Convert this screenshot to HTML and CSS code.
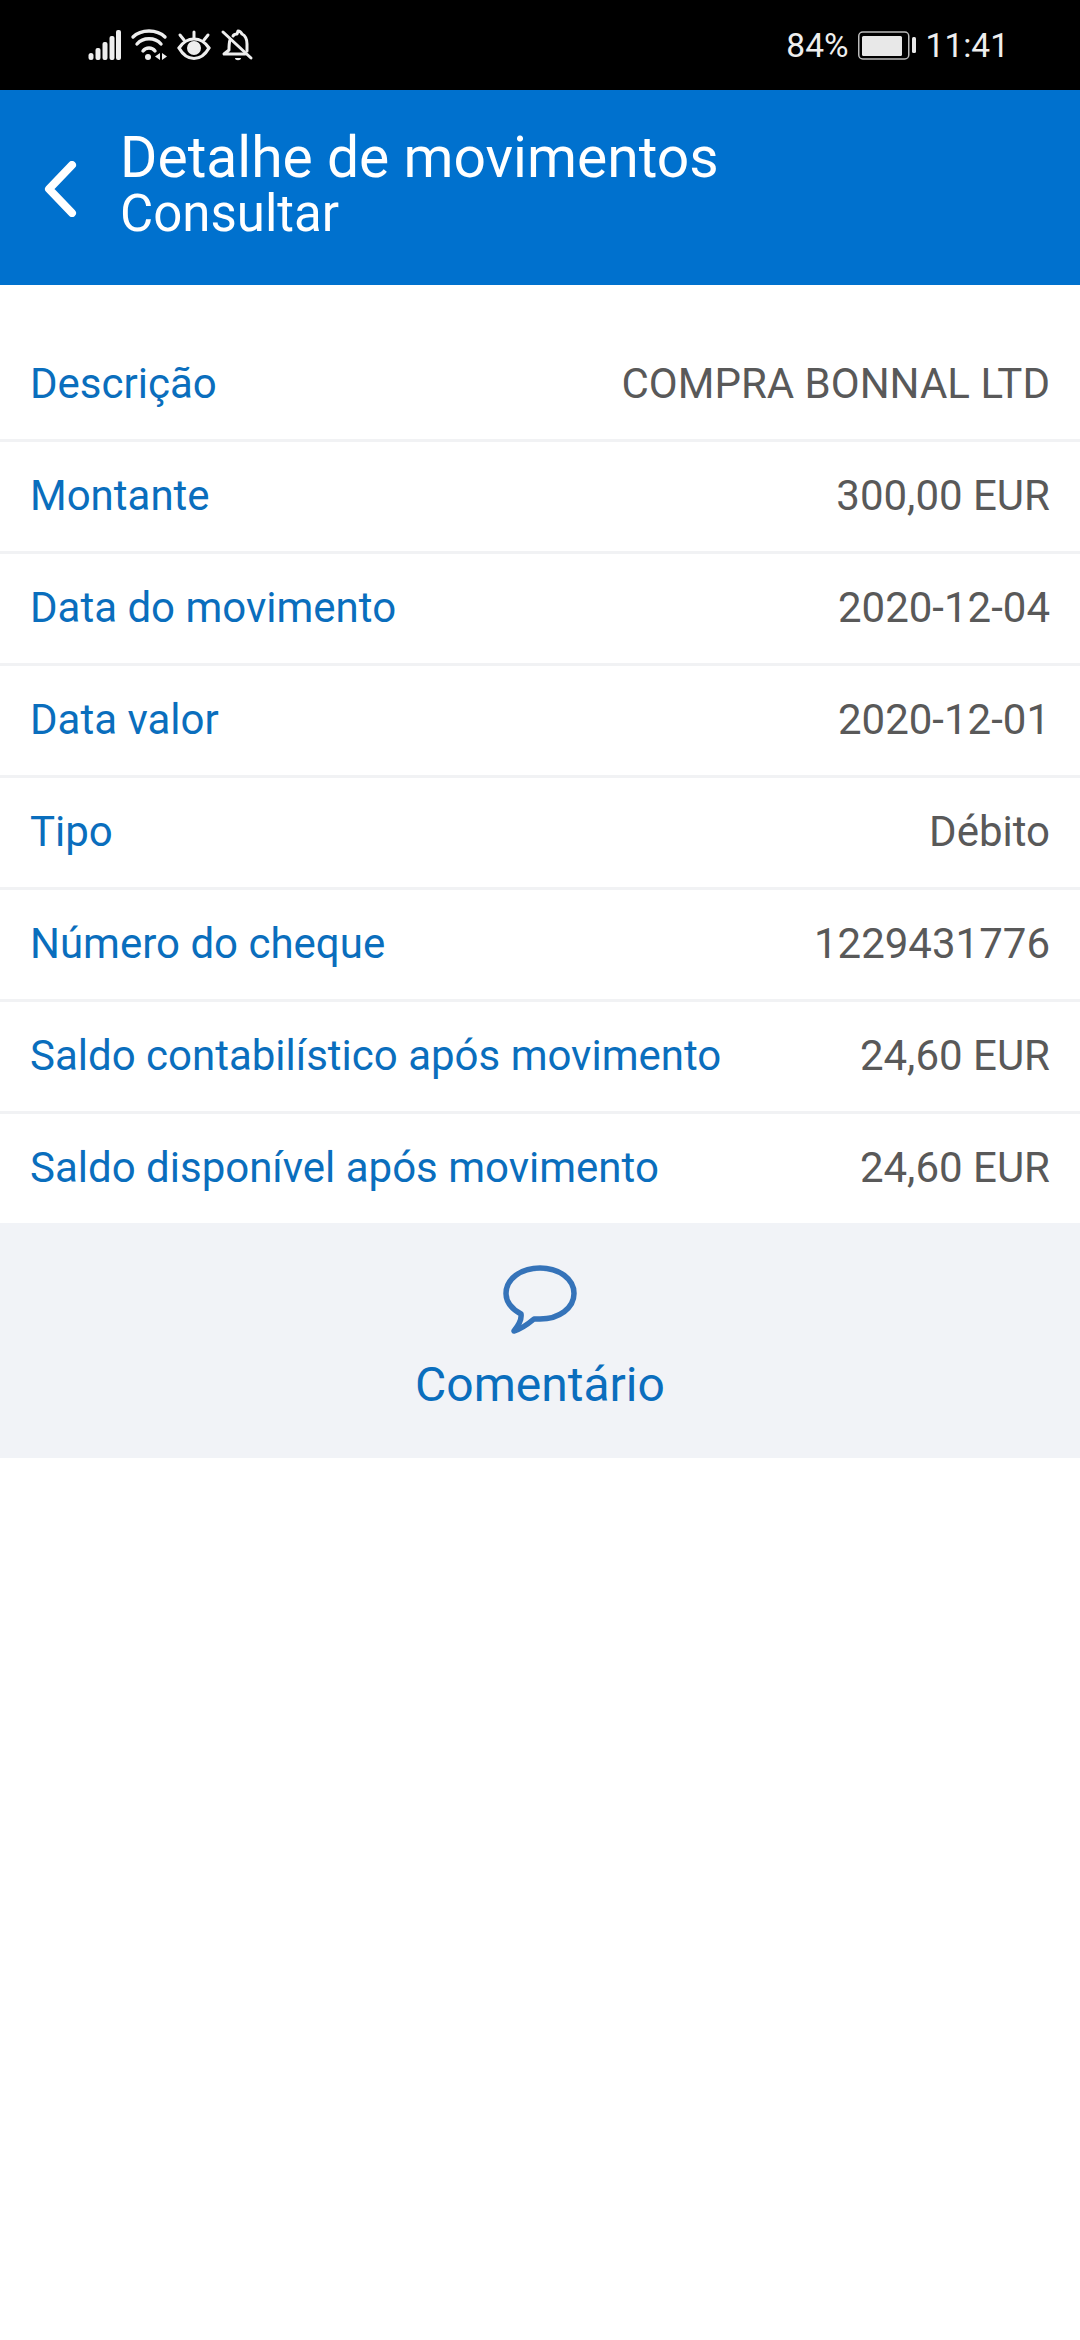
FILE: index.html
```html
<!DOCTYPE html>
<html lang="pt">
<head>
  <meta charset="UTF-8" />
  <title>Detalhe de movimentos</title>
  <link rel="stylesheet" href="styles.css">
</head>
<body>

<div class="status-bar">
  <div class="status-icons">
    <svg class="icon-signal" width="33" height="32" viewBox="0 0 33 32">
      <g fill="#eee">
        <rect x="0.500" y="24" width="5" height="7" rx="2.500"/>
        <rect x="7.500" y="19" width="5" height="12" rx="2"/>
        <rect x="14.500" y="13" width="5" height="18" rx="2"/>
        <rect x="21.500" y="7" width="5" height="24" rx="2"/>
        <rect x="28" y="1" width="5" height="30" rx="2"/>
      </g>
    </svg>
    <svg class="icon-wifi" width="38" height="32" viewBox="0 0 38 32">
      <g fill="none" stroke="#eee" stroke-width="3.400" stroke-linecap="round">
        <path d="M3 8C11 0 27 0 35 8"/>
        <path d="M7 15C13 8 25 8 31 15"/>
        <path d="M13 22C16 18 22 18 25 22"/>
      </g>
      <circle cx="18" cy="28" r="3" fill="#eee"/>
      <path d="M30 24v7l-5-3.500zM32 24v7l5-3.500z" fill="#eee"/>
    </svg>
    <svg class="icon-eye" width="34" height="32" viewBox="0 0 34 32">
      <path d="M2 19C10 7 24 7 32 19C24 33 10 33 2 19Z" fill="none" stroke="#eee" stroke-width="3.200"/>
      <circle cx="17" cy="19" r="7" fill="#eee"/>
      <path d="M17 3v6M3 6l4 5M31 6l-4 5" stroke="#eee" stroke-width="3" stroke-linecap="round"/>
    </svg>
    <svg class="icon-bell" width="34" height="32" viewBox="0 0 34 32">
      <g fill="none" stroke="#eee" stroke-width="3" stroke-linecap="round" stroke-linejoin="round">
        <path d="M3 3L31 29"/>
        <path d="M10 11C9 14 9 18 9 21L4 25H25"/>
        <path d="M13 7C14 5 16 5 17 5L18 2C19 2 21 3 22 5C26 7 27 10 27 15V22"/>
      </g>
      <path d="M15 29h6c0 3-6 3-6 0z" fill="#eee"/>
    </svg>
  </div>
  <div class="status-right">
    <span>84%</span>
    <svg class="icon-battery" width="59" height="30" viewBox="0 0 59 30">
      <rect x="0.750" y="2" width="50" height="27" rx="4" fill="none" stroke="#bbb" stroke-width="1.500"/>
      <rect x="4" y="6" width="40" height="20" rx="1.500" fill="#e8e8e8"/>
      <rect x="54" y="7" width="4" height="16" rx="1.500" fill="#e8e8e8"/>
    </svg>
    <span>11:41</span>
  </div>
</div>

<header class="app-header">
  <svg class="back-icon" width="36" height="56" viewBox="0 0 36 56">
    <path d="M30 4L7 28L30 52" fill="none" stroke="#fff" stroke-width="8" stroke-linecap="round" stroke-linejoin="round"/>
  </svg>
  <div class="titles">
    <h1>Detalhe de movimentos</h1>
    <h2>Consultar</h2>
  </div>
</header>

<main class="details">
  <div class="row"><span class="label">Descrição</span><span class="value">COMPRA BONNAL LTD</span></div>
  <div class="row"><span class="label">Montante</span><span class="value">300,00 EUR</span></div>
  <div class="row"><span class="label">Data do movimento</span><span class="value">2020-12-04</span></div>
  <div class="row"><span class="label">Data valor</span><span class="value">2020-12-01</span></div>
  <div class="row"><span class="label">Tipo</span><span class="value">Débito</span></div>
  <div class="row"><span class="label">Número do cheque</span><span class="value">1229431776</span></div>
  <div class="row"><span class="label">Saldo contabilístico após movimento</span><span class="value">24,60 EUR</span></div>
  <div class="row"><span class="label">Saldo disponível após movimento</span><span class="value">24,60 EUR</span></div>
</main>

<div class="comment-bar">
  <svg class="comment-icon" width="76" height="70" viewBox="0 0 76 70">
    <path d="M38 4C57 4 72 15 72 29.500C72 44 57 55 38 55C36 55 34 55 32 55C26 60 20 65 12 67C16 62 20 56 19 50C10 45 4 38 4 29.500C4 15 19 4 38 4Z" fill="none" stroke="#3573b9" stroke-width="5.500" stroke-linejoin="round"/>
  </svg>
  <span class="comment-label">Comentário</span>
</div>

</body>
</html>
```

FILE: styles.css
```css
* {
  box-sizing: border-box;
}
body {
  margin: 0;
  font-family: Roboto, sans-serif;
  background-color: white;
}
.status-bar {
  display: flex;
  height: 90px;
  align-items: center;
  justify-content: space-between;
  padding: 0 71px 0 88px;
  background-color: #000;
  color: #eee;
  font-size: 33.500px;
}
.status-icons {
  display: flex;
  align-items: center;
  gap: 9px;
}
.status-right {
  display: flex;
  align-items: center;
  gap: 9px;
}
.app-header {
  display: flex;
  height: 195px;
  align-items: center;
  padding-left: 42px;
  background-color: #0071ce;
  color: white;
}
.back-icon {
  margin-top: 3px;
  margin-right: 42px;
}
.titles {
  margin-top: -8px;
}
.titles h1 {
  margin: 0;
  font-size: 57px;
  font-weight: 400;
  line-height: 60px;
}
.titles h2 {
  margin: 0;
  font-size: 51px;
  font-weight: 400;
  line-height: 52px;
}
.details {
  padding-top: 45px;
}
.row {
  display: flex;
  height: 112px;
  align-items: center;
  justify-content: space-between;
  padding: 0 30px 3px;
  border-bottom: 3px solid #f1f2f4;
  font-size: 42px;
}
.row:last-child {
  height: 109px;
  border-bottom: none;
}
.label {
  color: #0a6ebd;
}
.value {
  color: #595959;
}
.comment-bar {
  display: flex;
  height: 235px;
  flex-direction: column;
  align-items: center;
  padding-top: 41px;
  background-color: #f1f3f7;
}
.comment-icon {
  margin-bottom: 22px;
}
.comment-label {
  color: #0a6ebd;
  font-size: 48px;
}
```
